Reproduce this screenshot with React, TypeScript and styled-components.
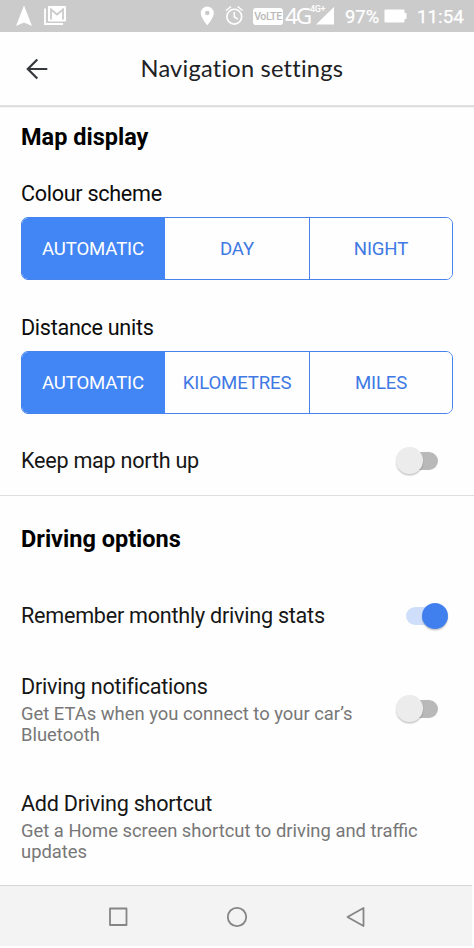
import React from 'react';
import styled, { createGlobalStyle } from 'styled-components';

const GlobalStyle = createGlobalStyle`
  * { box-sizing: border-box; }
  body { margin: 0; background: #fff; font-family: Roboto, "Liberation Sans", sans-serif; }
`;

const Screen = styled.div`
  width: 474px;
  height: 948px;
  display: flex;
  flex-direction: column;
  background: #fefefe;
  overflow: hidden;
`;

const StatusBar = styled.header`
  height: 32px;
  flex: none;
  display: flex;
  justify-content: space-between;
  background: #cbcbcb;
  color: #fff;
`;

const StatusIcons = styled.svg`
  display: block;
  flex: none;
`;

const StatusRight = styled.div`
  display: flex;
  align-items: center;
  width: 274px;
`;

const StatusText = styled.span<{ $width: number; $size: number }>`
  width: ${p => p.$width}px;
  font-size: ${p => p.$size}px;
  font-weight: 400;
  line-height: 32px;
  padding-top: 1px;
  white-space: nowrap;
  flex: none;
  -webkit-text-stroke: 0.25px #fff;
`;

const Percent = styled(StatusText)`
  margin-left: 11px;
`;

const VolteBadge = styled.span`
  width: 30px;
  height: 17px;
  border-radius: 3px;
  background: #fff;
  color: #b9b9b9;
  font: 500 10.5px/18px Roboto, sans-serif;
  letter-spacing: -0.3px;
  text-align: center;
  flex: none;
`;

const NetworkText = styled.span`
  width: 27px;
  padding-left: 2px;
  font: 400 22.5px/34px "Noto Sans", sans-serif;
  letter-spacing: -2px;
  flex: none;
`;

const NetworkSuffix = styled.span`
  width: 6px;
  height: 24px;
  font: 500 9px/11px Roboto, sans-serif;
  letter-spacing: -0.4px;
  flex: none;
  white-space: nowrap;
`;

const AppBar = styled.div`
  height: 76px;
  flex: none;
  display: grid;
  grid-template-columns: 140.5px 1fr;
  border-bottom: 1px solid #f3f3f3;
  box-shadow: inset 0 -2px 0 #dfdfdf;
`;

const BackButton = styled.button`
  border: 0;
  padding: 0 0 0 26px;
  height: 73px;
  background: none;
  display: flex;
  align-items: center;
`;

const Title = styled.h1`
  margin: 0;
  font: 400 23.6px/73px Lato, sans-serif;
  letter-spacing: 0.23px;
  color: #202124;
  white-space: nowrap;
`;

const Section = styled.section<{ $height: number; $divided?: boolean }>`
  height: ${p => p.$height}px;
  flex: none;
  padding: 0 21px;
  border-bottom: ${p => (p.$divided ? '1px solid #dedede' : '0')};
`;

const SectionTitle = styled.h2<{ $height: number }>`
  margin: 0;
  font-size: 23.5px;
  font-weight: 700;
  line-height: ${p => p.$height}px;
  color: #000;
`;

const GroupLabel = styled.div<{ $gap: number }>`
  margin-top: ${p => p.$gap}px;
  height: 38px;
  font-size: 21.6px;
  letter-spacing: -0.3px;
  line-height: 29px;
  color: #0c0c0c;
`;

const Segments = styled.div`
  width: 432px;
  height: 63px;
  display: grid;
  grid-template-columns: 143px 145px 1fr;
  border: 1px solid #4683ec;
  border-radius: 7px;
  overflow: hidden;
`;

const Segment = styled.button<{ $selected?: boolean }>`
  border: 0;
  border-right: 1px solid ${p => (p.$selected ? '#4285f4' : '#4683ec')};
  padding: 0;
  background: ${p => (p.$selected ? '#4285f4' : '#fefefe')};
  color: ${p => (p.$selected ? '#fff' : '#4079e4')};
  font: 400 18.6px/63px Roboto, sans-serif;
  letter-spacing: -0.15px;
  &:last-child { border-right: 0; }
`;

const Row = styled.div<{ $height: number; $offset?: number }>`
  height: ${p => p.$height}px;
  padding-top: ${p => p.$offset ?? 0}px;
  display: flex;
  align-items: center;
  justify-content: space-between;
`;

const RowTitle = styled.div`
  font-size: 21.6px;
  letter-spacing: -0.25px;
  line-height: 30px;
  color: #161616;
  white-space: nowrap;
`;

const Description = styled.div`
  margin-top: 1px;
  font-size: 18.4px;
  line-height: 21.5px;
  color: #777;
  white-space: pre-line;
`;

const Track = styled.div<{ $on?: boolean }>`
  position: relative;
  width: 32px;
  height: 18px;
  flex: none;
  margin-right: 15px;
  border-radius: 9px;
  background: ${p => (p.$on ? '#cfdefb' : '#b9b9b9')};
  &::after {
    content: '';
    position: absolute;
    top: -4.5px;
    left: ${p => (p.$on ? 15.5 : -10)}px;
    width: 26.5px;
    height: 26.5px;
    border-radius: 50%;
    background: ${p => (p.$on ? '#4080ee' : '#ececec')};
    box-shadow: 0 1.5px 1.5px rgba(0, 0, 0, 0.22);
  }
`;

const NavBar = styled.nav`
  height: 61px;
  width: 472px;
  flex: none;
  display: flex;
  align-items: center;
  justify-content: center;
  gap: 89px;
  padding: 1px 0 0 2px;
  border-top: 1px solid #d7d7d7;
  background: #f3f3f3;
`;

const NavIcon = ({ children }: { children: React.ReactNode }) => (
  <svg width="30" height="30" viewBox="0 0 30 30" fill="none" stroke="#858585" strokeWidth="1.8" strokeLinejoin="round">
    {children}
  </svg>
);

const Choice = ({ options }: { options: string[] }) => (
  <Segments>
    {options.map((o, i) => <Segment key={o} $selected={i === 0}>{o}</Segment>)}
  </Segments>
);

export default function App() {
  return (
    <>
      <GlobalStyle />
      <Screen>
        <StatusBar>
          <StatusIcons width="80" height="32" viewBox="0 0 80 32">
            <path d="M24 5.5 32 26 24 22.5 16 26Z" fill="#fff" />
            <path d="M45 8.5V24H63" fill="none" stroke="#fff" strokeWidth="1.8" />
            <rect x="48" y="6" width="18" height="15.5" rx="1" fill="#fff" />
            <path d="M51 19.5V9.5L57 14.5 63 9.5V19.5" fill="none" stroke="#cbcbcb" strokeWidth="1.8" />
          </StatusIcons>
          <StatusRight>
            <StatusIcons width="53" height="32" viewBox="0 0 53 32">
              <path d="M7.3 6.5a6.5 6.5 0 0 0-6.5 6.5c0 4.9 6.5 12.2 6.5 12.2s6.5-7.3 6.5-12.2a6.5 6.5 0 0 0-6.5-6.5Zm0 4.2a2.3 2.3 0 1 1 0 4.6 2.3 2.3 0 0 1 0-4.6Z" fill="#fff" fillRule="evenodd" />
              <g fill="none" stroke="#fff" strokeWidth="1.6">
                <circle cx="34.3" cy="16.7" r="7.4" />
                <path d="M34.3 12v5l3.5 2M26 10.5l5-4M42.6 10.5l-5-4" />
              </g>
            </StatusIcons>
            <VolteBadge>VoLTE</VolteBadge>
            <NetworkText>4G</NetworkText>
            <NetworkSuffix>4G+</NetworkSuffix>
            <StatusIcons width="18" height="32" viewBox="0 0 18 32"><path d="M0 24.5 18 7V24.5Z" fill="#fff" /></StatusIcons>
            <Percent $width={39} $size={18.4}>97%</Percent>
            <StatusIcons width="33" height="32" viewBox="0 0 33 32">
              <path d="M1.5 9.5H19.5a1 1 0 0 1 1 1V13H22.5V19H20.5V21.5a1 1 0 0 1-1 1H1.5a1 1 0 0 1-1-1v-11a1 1 0 0 1 1-1Z" fill="#fff" />
            </StatusIcons>
            <StatusText $width={49} $size={18.8}>11:54</StatusText>
          </StatusRight>
        </StatusBar>

        <AppBar>
          <BackButton aria-label="Back">
            <svg width="22" height="22" viewBox="0 0 22 22" fill="none" stroke="#34373b" strokeWidth="2.2">
              <path d="M21.3 11H2M11.3 1.5 1.8 11l9.5 9.5" />
            </svg>
          </BackButton>
          <Title>Navigation settings</Title>
        </AppBar>

        <Section $height={388} $divided>
          <SectionTitle $height={59}>Map display</SectionTitle>
          <GroupLabel $gap={12}>Colour scheme</GroupLabel>
          <Choice options={['AUTOMATIC', 'DAY', 'NIGHT']} />
          <GroupLabel $gap={33}>Distance units</GroupLabel>
          <Choice options={['AUTOMATIC', 'KILOMETRES', 'MILES']} />
          <Row $height={81} $offset={12}>
            <RowTitle>Keep map north up</RowTitle>
            <Track />
          </Row>
        </Section>

        <Section $height={389}>
          <SectionTitle $height={87}>Driving options</SectionTitle>
          <Row $height={66}>
            <RowTitle>Remember monthly driving stats</RowTitle>
            <Track $on />
          </Row>
          <Row $height={119}>
            <div>
              <RowTitle>Driving notifications</RowTitle>
              <Description>{'Get ETAs when you connect to your car’s\nBluetooth'}</Description>
            </div>
            <Track />
          </Row>
          <Row $height={115}>
            <div>
              <RowTitle>Add Driving shortcut</RowTitle>
              <Description>{'Get a Home screen shortcut to driving and traffic\nupdates'}</Description>
            </div>
          </Row>
        </Section>

        <NavBar>
          <NavIcon><rect x="7" y="6.5" width="16.5" height="16.5" /></NavIcon>
          <NavIcon><circle cx="15" cy="15" r="9.2" /></NavIcon>
          <NavIcon><path d="M6.5 15 22.5 6V24Z" /></NavIcon>
        </NavBar>
      </Screen>
    </>
  );
}
